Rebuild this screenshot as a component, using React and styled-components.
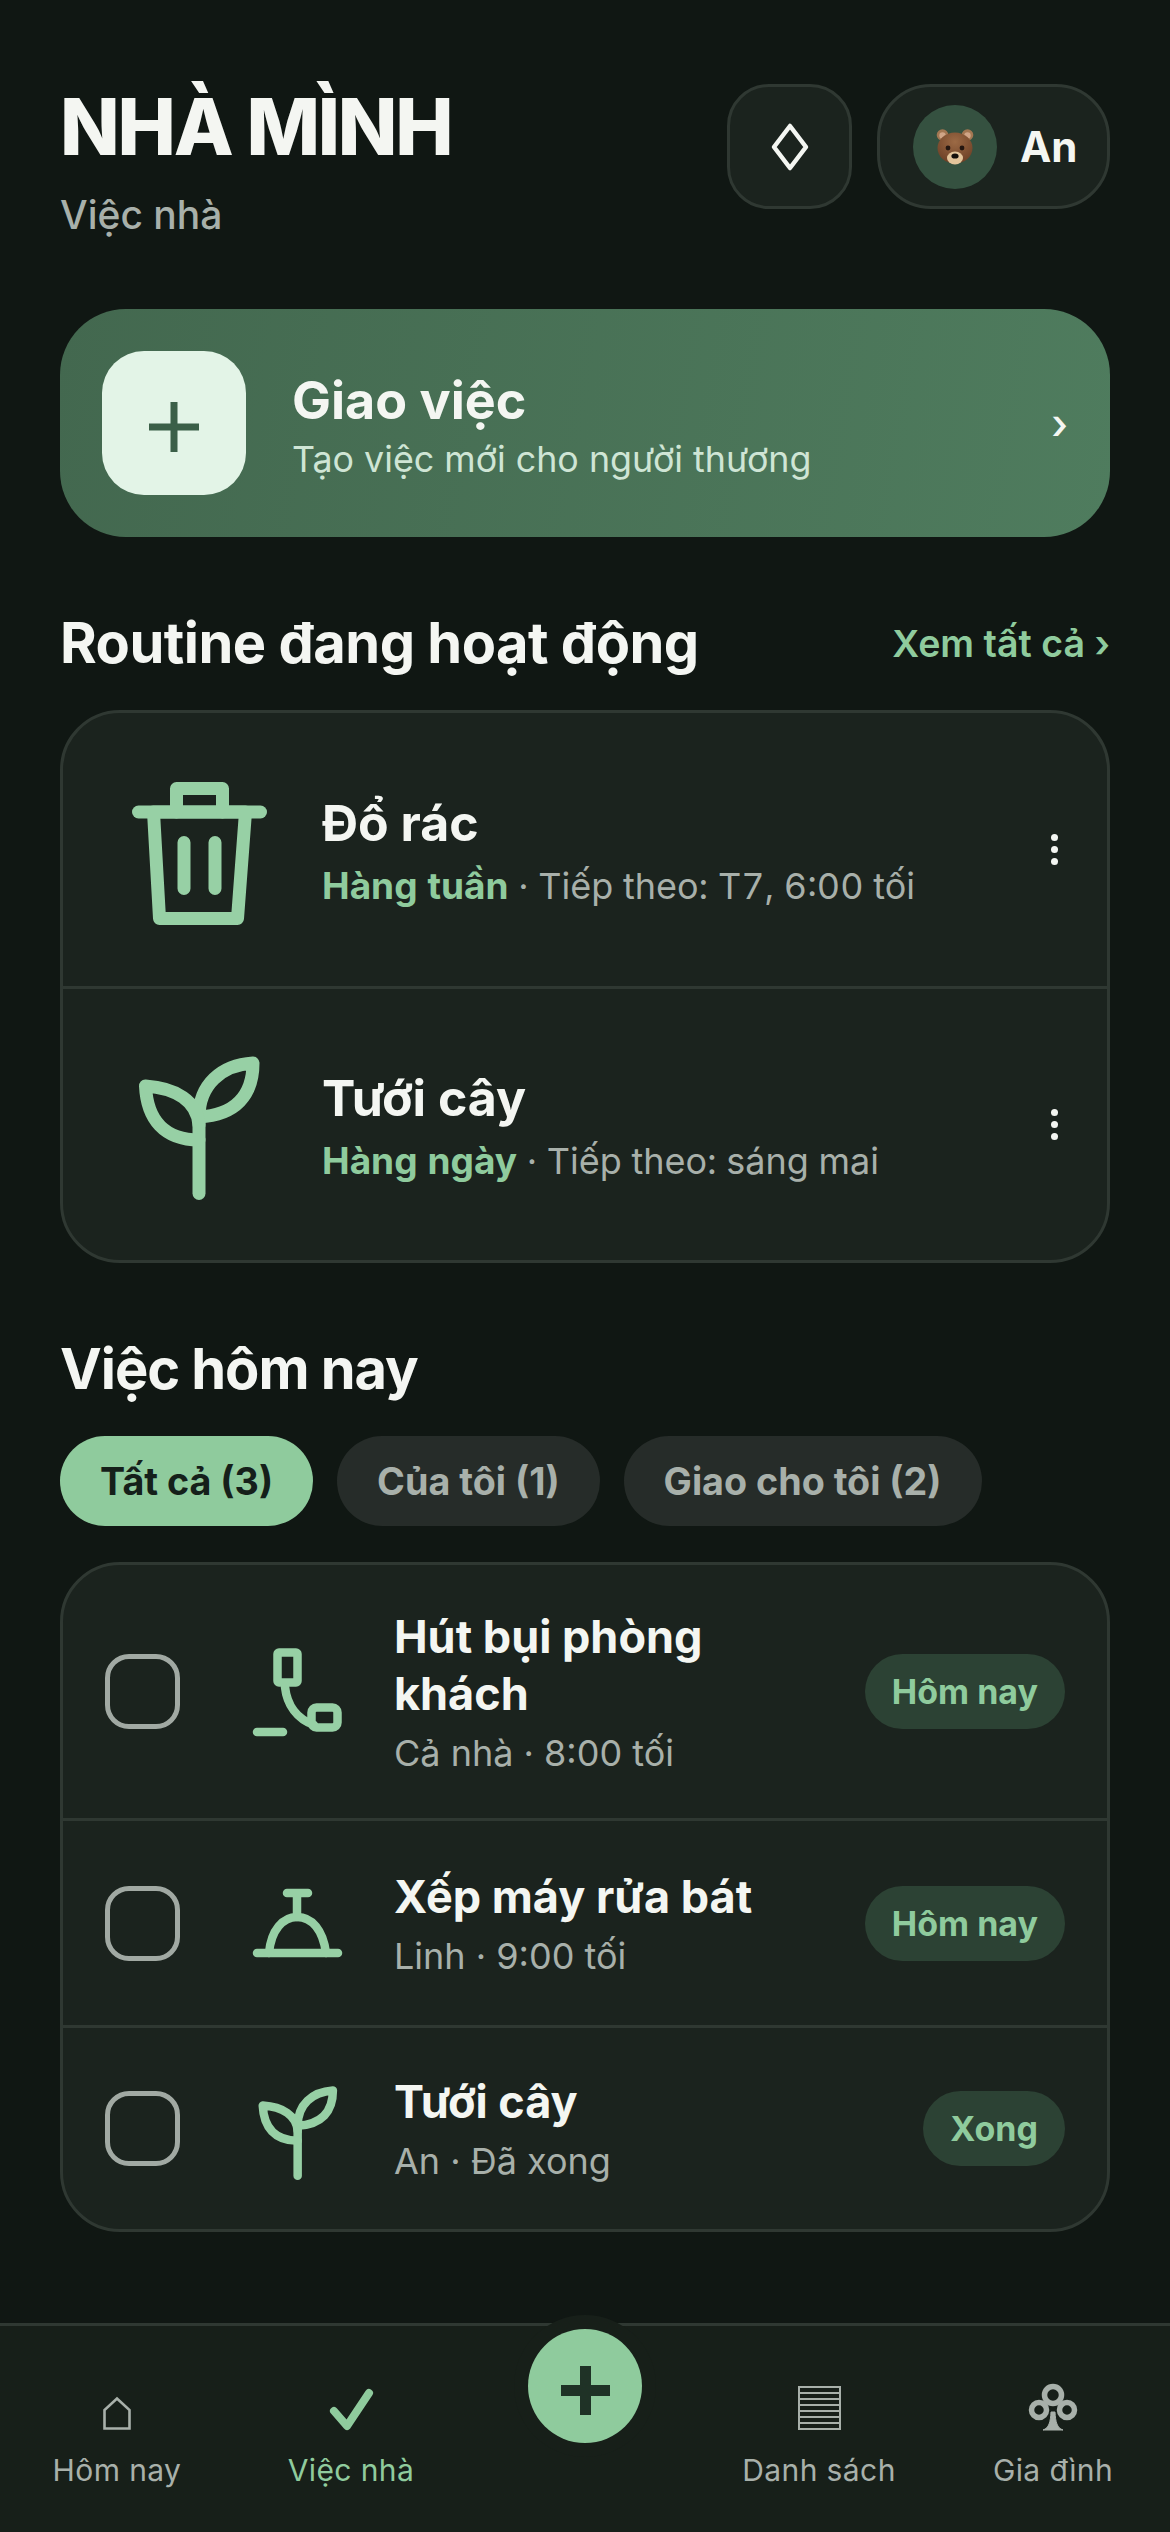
import React from "react";
import styled, { createGlobalStyle } from "styled-components";

const Global = createGlobalStyle`
  html, body { margin: 0; padding: 0; background: #101713; }
  body { font-family: Inter, "Noto Sans", sans-serif; -webkit-font-smoothing: antialiased; }
  * { box-sizing: border-box; }
  svg { overflow: visible; display: block; }
`;

const Page = styled.div`
  width: 1170px; height: 2532px; display: flex; flex-direction: column;
  background: #101713; overflow: hidden; position: relative;
`;
const Main = styled.main`
  flex: 1; padding: 84px 60px 0; display: flex; flex-direction: column;
`;
const Header = styled.header`
  display: flex; justify-content: space-between; align-items: flex-start; height: 225px;
`;
const TitleBlock = styled.div`display: flex; flex-direction: column; gap: 22px;`;
const Title = styled.h1`
  margin: 0; font-size: 78px; line-height: 86px; font-weight: 800; letter-spacing: -2.2px; color: #f4f6f2;
`;
const Sub = styled.div`font-size: 39px; line-height: 46px; font-weight: 500; color: #a8b0aa;`;
const Actions = styled.div`display: flex; gap: 25px;`;
const IconBtn = styled.div`
  width: 125px; height: 125px; border-radius: 42px; background: #1b231e; border: 3px solid #2f3832;
  display: flex; align-items: center; justify-content: center;
`;
const UserPill = styled.div`
  height: 125px; width: 233px; border-radius: 54px; background: #1b231e; border: 3px solid #2f3832;
  display: flex; align-items: center; padding-left: 33px; gap: 23px;
`;
const Avatar = styled.div`
  width: 84px; height: 84px; border-radius: 50%; background: #355140;
  display: flex; align-items: center; justify-content: center;
`;
const UserName = styled.span`font-size: 42px; font-weight: 700; color: #f4f6f2;`;

const Cta = styled.div`
  height: 228px; border-radius: 66px; background: linear-gradient(100deg, #43684f, #4f7c5e);
  display: flex; align-items: center; padding: 0 42px; gap: 46px;
`;
const CtaIcon = styled.div`
  width: 144px; height: 144px; border-radius: 42px; background: #e3f4e7;
  display: flex; align-items: center; justify-content: center;
  & svg { margin-top: 8px; }
`;
const CtaText = styled.div`flex: 1; display: flex; flex-direction: column; padding-top: 6px;`;
const CtaTitle = styled.div`font-size: 52px; line-height: 62px; font-weight: 700; color: #f4f6f2;`;
const CtaSub = styled.div`font-size: 35.8px; line-height: 46px; color: #cfe5d5; margin-top: 4px;`;
const Chev = styled.span`font-size: 42px; font-weight: 500; color: #f4f6f2; margin-right: 0;`;

const SectionHead = styled.div`
  display: flex; justify-content: space-between; align-items: center; margin-top: ${p => p.$mt}px; height: 66px;
`;
const SectionTitle = styled.h2`
  margin: 0; font-size: 56px; font-weight: 700; letter-spacing: ${p => p.$ls}px; color: #f4f6f2;
`;
const SeeAll = styled.span`font-size: 37.5px; font-weight: 600; color: #8fcb9d;`;

const Card = styled.section`
  background: #1b231e; border: 3px solid #2f3832; border-radius: 60px; overflow: hidden;
  margin-top: ${p => p.$mt}px;
`;
const RoutineRow = styled.div`
  height: 273px; display: flex; align-items: center; padding: 0 42px 0 63px; gap: 52px;
  & + & { height: 274px; border-top: 3px solid #2f3832; }
`;
const RoutineIcon = styled.div`width: 144px; height: 144px; flex: none;`;
const RowBody = styled.div`flex: 1; min-width: 0; display: flex; flex-direction: column;`;
const RowTitle = styled.div`font-size: 50px; line-height: 66px; font-weight: 700; color: #f4f6f2;`;
const RowSub = styled.div`
  font-size: 36px; line-height: 48px; margin-top: 6px; color: #a8b0aa;
  font-variant-numeric: tabular-nums;
`;
const Freq = styled.b`font-size: 37px; font-weight: 700; color: #8fcb9d;`;
const Kebab = styled.div`
  width: 12px; display: flex; flex-direction: column; gap: 5px; align-items: center; margin-right: 5px;
  & i { width: 7px; height: 7px; border-radius: 50%; background: #f4f6f2; display: block; }
`;

const Chips = styled.div`display: flex; gap: 24px; margin-top: 34px;`;
const Chip = styled.div`
  height: 90px; border-radius: 45px; padding: 0 40px; display: flex; align-items: center;
  font-size: 37.7px; font-weight: 700;
  background: ${p => (p.$on ? "#8fcb9d" : "#262c29")};
  color: ${p => (p.$on ? "#15201a" : "#a8b0aa")};
`;

const TaskRow = styled.div`
  height: ${p => p.$h}px; display: flex; align-items: center; padding: 0 42px 0 42px;
  & + & { border-top: 3px solid #2f3832; }
`;
const Check = styled.div`
  width: 75px; height: 75px; border-radius: 24px; border: 5px solid #a1a9a3; flex: none; margin-right: 70px;
`;
const TaskIcon = styled.div`width: 90px; height: 90px; flex: none; margin-right: 54px;`;
const Tag = styled.div`
  height: 75px; border-radius: 38px; padding: 0 27px; background: #2c4234; color: #8fcb9d;
  display: flex; align-items: center; font-size: 34px; font-weight: 700; flex: none;
`;
const TaskTitle = styled.div`font-size: 45px; line-height: 57px; font-weight: 700; color: #f4f6f2; max-width: 420px;`;
const TaskSub = styled.div`font-size: 36px; line-height: 46px; margin-top: 8px; color: #a8b0aa;`;
const TaskBody = styled.div`flex: 1; min-width: 0;`;

const Nav = styled.nav`
  height: 209px; flex: none; background: #171f19; border-top: 3px solid #2f3832;
  display: grid; grid-template-columns: repeat(5, 234px); position: relative;
`;
const Tab = styled.div`
  display: flex; flex-direction: column; align-items: center; padding-top: 52px;
  color: ${p => (p.$on ? "#8fcb9d" : "#a8b0aa")};
`;
const TabIcon = styled.div`height: 52px; width: 60px; display: flex; justify-content: center; align-items: flex-end;`;
const TabLabel = styled.div`font-size: 30px; line-height: 36px; letter-spacing: 0.4px; margin-top: 22px;`;
const Fab = styled.div`
  position: absolute; left: 528px; top: 3px; width: 114px; height: 114px; border-radius: 50%;
  background: #8fcb9d; box-shadow: 0 0 0 14px #171f19;
  display: flex; align-items: center; justify-content: center;
  & svg { margin-top: 9px; }
`;

const c = "#97d0a5";
const Trash = () => (
  <svg viewBox="0 0 144 144" width="144" height="144" fill="none" stroke={c} strokeWidth="13" strokeLinecap="round" strokeLinejoin="round">
    <path d="M12.5 34H134.5" />
    <path d="M27.5 34H119.5L111.5 140.5H33.5Z" />
    <path d="M50.5 34V10.5H96.5V34" />
    <path d="M58 64.5V110.5M89 64.5V110.5" />
  </svg>
);
const Leaf = ({ size = 144, sw = 13 }) => (
  <svg viewBox="0 0 144 144" width={size} height={size} fill="none" stroke={c} strokeWidth={sw} strokeLinecap="round" strokeLinejoin="round">
    <path d="M73 140.5V62" />
    <path d="M73 64C73 32 95 12 127 10C127 42 110 62 73 64Z" />
    <path d="M73 87C38 87 21 66 19.5 33C50 35 71 48 73 72" />
  </svg>
);
const Vacuum = () => (
  <svg viewBox="0 0 90 90" width="90" height="90" fill="none" stroke={c} strokeWidth="8.5" strokeLinecap="round" strokeLinejoin="round">
    <rect x="27.5" y="5.5" width="20" height="30" rx="1.5" />
    <path d="M35 40C37 58 47 72 64 78" />
    <rect x="61.5" y="60.5" width="26" height="20" rx="5" />
    <path d="M7 85H33" />
  </svg>
);
const Bell = () => (
  <svg viewBox="0 0 90 90" width="90" height="90" fill="none" stroke={c} strokeWidth="8.5" strokeLinecap="round" strokeLinejoin="round">
    <path d="M7 75H88" />
    <path d="M19 75C21 52 33 39 47 39C62 39 73 52 76 75" />
    <path d="M47 39V15M37 15H58" />
  </svg>
);
const Bear = () => (
  <svg viewBox="0 0 38 36" width="38" height="36">
    <defs>
      <radialGradient id="bearFace" cx="50%" cy="30%" r="75%">
        <stop offset="0%" stopColor="#9c6a45" />
        <stop offset="100%" stopColor="#6a3d24" />
      </radialGradient>
    </defs>
    <circle cx="6.5" cy="6" r="5.8" fill="#a37752" />
    <circle cx="31.5" cy="6" r="5.8" fill="#a37752" />
    <circle cx="6.5" cy="6.5" r="3.2" fill="#d0a587" />
    <circle cx="31.5" cy="6.5" r="3.2" fill="#d0a587" />
    <ellipse cx="19" cy="19" rx="17.5" ry="15.5" fill="url(#bearFace)" />
    <ellipse cx="19" cy="29" rx="8" ry="6.5" fill="#e3c49b" />
    <circle cx="12" cy="19" r="2.4" fill="#241610" />
    <circle cx="26" cy="19" r="2.4" fill="#241610" />
    <ellipse cx="19" cy="27" rx="3.6" ry="2.6" fill="#15100c" />
  </svg>
);

export default function App() {
  return (
    <Page>
      <Global />
      <Main>
        <Header>
          <TitleBlock>
            <Title>NHÀ MÌNH</Title>
            <Sub>Việc nhà</Sub>
          </TitleBlock>
          <Actions>
            <IconBtn>
              <svg width="38" height="48" viewBox="0 0 38 48" fill="none" stroke="#f4f6f2" strokeWidth="4.5" strokeLinejoin="round">
                <path d="M19 3L35 24L19 45L3 24Z" />
              </svg>
            </IconBtn>
            <UserPill>
              <Avatar><Bear /></Avatar>
              <UserName>An</UserName>
            </UserPill>
          </Actions>
        </Header>

        <Cta>
          <CtaIcon>
            <svg width="50" height="50" viewBox="0 0 50 50" fill="#3b5f48">
              <rect x="21.5" y="0" width="7" height="50" />
              <rect x="0" y="21.5" width="50" height="7" />
            </svg>
          </CtaIcon>
          <CtaText>
            <CtaTitle>Giao việc</CtaTitle>
            <CtaSub>Tạo việc mới cho người thương</CtaSub>
          </CtaText>
          <Chev>›</Chev>
        </Cta>

        <SectionHead $mt={73}>
          <SectionTitle $ls={-0.5}>Routine đang hoạt động</SectionTitle>
          <SeeAll>Xem tất cả ›</SeeAll>
        </SectionHead>
        <Card $mt={34}>
          <RoutineRow>
            <RoutineIcon><Trash /></RoutineIcon>
            <RowBody>
              <RowTitle>Đổ rác</RowTitle>
              <RowSub><Freq>Hàng tuần</Freq> · Tiếp theo: T7, 6:00 tối</RowSub>
            </RowBody>
            <Kebab><i /><i /><i /></Kebab>
          </RoutineRow>
          <RoutineRow>
            <RoutineIcon><Leaf /></RoutineIcon>
            <RowBody>
              <RowTitle>Tưới cây</RowTitle>
              <RowSub><Freq>Hàng ngày</Freq> · Tiếp theo: sáng mai</RowSub>
            </RowBody>
            <Kebab><i /><i /><i /></Kebab>
          </RoutineRow>
        </Card>

        <SectionHead $mt={73}>
          <SectionTitle $ls={-1.05}>Việc hôm nay</SectionTitle>
        </SectionHead>
        <Chips>
          <Chip $on>Tất cả (3)</Chip>
          <Chip>Của tôi (1)</Chip>
          <Chip>Giao cho tôi (2)</Chip>
        </Chips>
        <Card $mt={36}>
          <TaskRow $h={253}>
            <Check />
            <TaskIcon><Vacuum /></TaskIcon>
            <TaskBody>
              <TaskTitle>Hút bụi phòng khách</TaskTitle>
              <TaskSub>Cả nhà · 8:00 tối</TaskSub>
            </TaskBody>
            <Tag>Hôm nay</Tag>
          </TaskRow>
          <TaskRow $h={207}>
            <Check />
            <TaskIcon><Bell /></TaskIcon>
            <TaskBody>
              <TaskTitle>Xếp máy rửa bát</TaskTitle>
              <TaskSub>Linh · 9:00 tối</TaskSub>
            </TaskBody>
            <Tag>Hôm nay</Tag>
          </TaskRow>
          <TaskRow $h={204}>
            <Check />
            <TaskIcon><Leaf size={94} sw={13} /></TaskIcon>
            <TaskBody>
              <TaskTitle>Tưới cây</TaskTitle>
              <TaskSub>An · Đã xong</TaskSub>
            </TaskBody>
            <Tag>Xong</Tag>
          </TaskRow>
        </Card>
      </Main>

      <Nav>
        <Tab>
          <TabIcon>
            <svg width="28" height="33" viewBox="0 0 28 33" fill="none" stroke="currentColor" strokeWidth="2.6">
              <path d="M1.5 31.5V13L14 1.5L26.5 13V31.5Z" />
            </svg>
          </TabIcon>
          <TabLabel>Hôm nay</TabLabel>
        </Tab>
        <Tab $on>
          <TabIcon>
            <svg width="43" height="41" viewBox="0 0 43 41" fill="none" stroke="#8fcb9d" strokeWidth="8" strokeLinecap="round" strokeLinejoin="round">
              <path d="M4 22L17 37L39 4" />
            </svg>
          </TabIcon>
          <TabLabel>Việc nhà</TabLabel>
        </Tab>
        <div />
        <Tab>
          <TabIcon>
            <svg width="43" height="44" viewBox="0 0 43 44" fill="none" stroke="currentColor" strokeWidth="2">
              <rect x="1" y="1" width="41" height="42" />
              <path d="M1 7H42M1 13H42M1 19H42M1 25H42M1 31H42M1 37H42" />
            </svg>
          </TabIcon>
          <TabLabel>Danh sách</TabLabel>
        </Tab>
        <Tab>
          <TabIcon>
            <svg width="48" height="46" viewBox="0 0 48 46" fill="none" stroke="currentColor" strokeWidth="5.5">
              <circle cx="24" cy="11" r="8.5" />
              <circle cx="10" cy="26" r="7.5" />
              <circle cx="38" cy="26" r="7.5" />
              <path d="M14 46C20 44 21.5 38 22 28H26C26.5 38 28 44 34 46Z" fill="currentColor" strokeWidth="1" />
            </svg>
          </TabIcon>
          <TabLabel>Gia đình</TabLabel>
        </Tab>
        <Fab>
          <svg width="49" height="49" viewBox="0 0 49 49" fill="#1f3226">
            <rect x="19" y="0" width="11" height="49" />
            <rect x="0" y="19" width="49" height="11" />
          </svg>
        </Fab>
      </Nav>
    </Page>
  );
}
